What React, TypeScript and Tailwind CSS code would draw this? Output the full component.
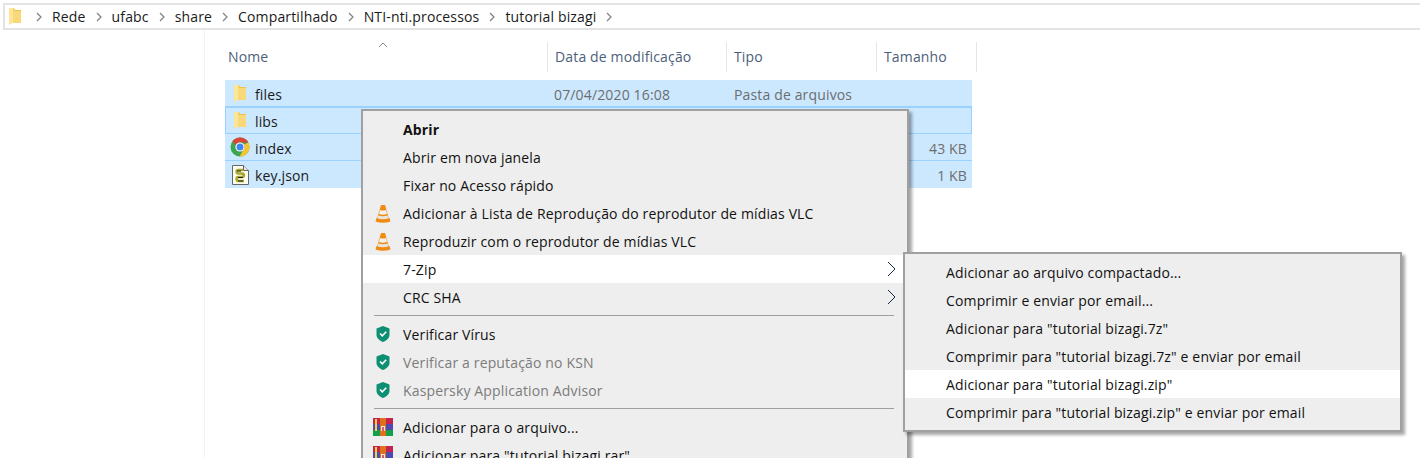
import React from "react";

function FolderIcon() {
  return (
    <svg width="12" height="17" viewBox="0 0 12 17" className="shrink-0">
      <path d="M0 0h5l1 2h6v13H4z" fill="#efc24f" />
      <path d="M4.500 3H12v12H4.500z" fill="#f8d878" />
      <path d="M0 0h4.500v14.500L0 17z" fill="#fde596" />
    </svg>
  );
}

function ChromeIcon() {
  return (
    <svg width="20" height="20" viewBox="0 0 20 20" className="shrink-0">
      <circle cx="10" cy="10" r="9.5" fill="#3fa650" />
      <path d="M10 .5a9.500 9.500 0 0 1 8.400 5H10a4.500 4.500 0 0 0-4.200 2.800L2.600 4A9.500 9.500 0 0 1 10 .5z" fill="#db4437" />
      <path d="M18.400 5.500A9.500 9.500 0 0 1 9.500 19.500l3.900-6.600A4.500 4.500 0 0 0 13.800 7.500z" fill="#f7c52f" />
      <circle cx="10" cy="10" r="4.600" fill="#fff" />
      <circle cx="10" cy="10" r="3.500" fill="#4285f4" />
    </svg>
  );
}

function ScriptIcon() {
  return (
    <svg width="17" height="20" viewBox="0 0 17 20" className="shrink-0">
      <path d="M.5.5h11l5 5v14H.5z" fill="#fdfdf2" stroke="#666" />
      <path d="M11.500.5v5h5" fill="#e8e8e8" stroke="#666" />
      <path d="M11 5H6.500C4 5 4 8.500 6.500 8.500H10c2.500 0 2.500 3.500 0 3.500H6.500C4 12 4 16 6.500 16H12" fill="none" stroke="#a8a82a" strokeWidth="2.600" />
      <path d="M5 6h4M6 12.500h5M6 16h5" stroke="#222" strokeWidth="1" />
    </svg>
  );
}

function VlcIcon() {
  return (
    <svg width="16" height="19" viewBox="0 0 16 19" className="shrink-0">
      <path d="M1.500 14h13l1 3.500q-7.500 2.500-15 0z" fill="#ef8a12" />
      <path d="M6 1h4l4 14q-6 2-12 0z" fill="#f08c13" />
      <path d="M5 6q3 1 6 0l1 4q-4 1.500-8 0z" fill="#f4f1ec" />
      <path d="M3.300 11.500q4.700 1.500 9.400 0l.8 3q-5.500 1.500-11 0z" fill="#e8e4de" />
    </svg>
  );
}

function ShieldIcon() {
  return (
    <svg width="14" height="16" viewBox="0 0 14 16" className="shrink-0">
      <path d="M7 0l6.500 2.500V9c0 3-3 5.500-6.500 7C3.500 14.500.5 12 .5 9V2.500z" fill="#0d8f73" />
      <path d="M4 7.500l2.300 2.300L10.200 5.800" fill="none" stroke="#fff" strokeWidth="1.600" />
    </svg>
  );
}

function RarIcon() {
  return (
    <svg width="20" height="19" viewBox="0 0 20 19" className="shrink-0">
      <rect x="0" y="0" width="20" height="6" fill="#c4234f" />
      <rect x="0" y="6" width="20" height="6" fill="#4f4ab0" />
      <rect x="0" y="12" width="20" height="6" fill="#14a04a" />
      <rect x="2" y="1" width="2" height="12" fill="#f2d43a" />
      <rect x="7" y="0" width="6" height="18" fill="#e0701c" />
      <rect x="8" y="8" width="4" height="5" fill="#f7efe2" />
      <rect x="9.300" y="9" width="1.400" height="4" fill="#b5234f" />
    </svg>
  );
}

function Crumb({ label }: { label: string }) {
  return (
    <>
      <svg width="6" height="10" viewBox="0 0 6 10" className="shrink-0">
        <path d="M1 1l4 4-4 4" fill="none" stroke="#7f7f7f" strokeWidth="1.200" />
      </svg>
      {label && <span>{label}</span>}
    </>
  );
}

function Row({
  icon,
  name,
  date,
  type,
  size,
  focused,
}: {
  icon: React.ReactNode;
  name: string;
  date?: string;
  type?: string;
  size?: string;
  focused?: boolean;
}) {
  return (
    <div
      className={`grid grid-cols-[322px_180px_150px_95px] h-[27px] items-center bg-[#cce8ff] border-b border-[#99d1ff] last:border-b-0 ${
        focused ? "outline outline-1 -outline-offset-1 outline-[#99d1ff]" : ""
      }`}
    >
      <div className="flex items-center">
        <div className="w-[30px] flex justify-center">{icon}</div>
        <span className="pt-[3px] text-[#1a1a1a]">{name}</span>
      </div>
      <span className="pt-[3px] pl-[7px] text-[#6d6d6d]">{date}</span>
      <span className="pt-[3px] pl-[7px] text-[#6d6d6d]">{type}</span>
      <span className="pt-[3px] pr-[5px] text-right text-[#6d6d6d]">{size}</span>
    </div>
  );
}

function MenuItem({
  icon,
  label,
  bold,
  disabled,
  hover,
  arrow,
  sub,
}: {
  icon?: React.ReactNode;
  label: string;
  bold?: boolean;
  disabled?: boolean;
  hover?: boolean;
  arrow?: boolean;
  sub?: boolean;
}) {
  return (
    <div
      className={`flex items-center h-7 ${hover ? "bg-white" : ""} ${
        disabled ? "text-[#7c7c7c]" : "text-[#111]"
      } ${bold ? "font-bold" : ""}`}
    >
      <div className={`${sub ? "w-[41px]" : "w-10"} flex justify-center shrink-0`}>{icon}</div>
      <span className="grow whitespace-nowrap pt-[2px]">{label}</span>
      {arrow && (
        <svg width="9" height="16" viewBox="0 0 9 16" className="mr-[11px]">
          <path d="M1 1l7 7-7 7" fill="none" stroke="#14264a" strokeWidth="1" />
        </svg>
      )}
    </div>
  );
}

function Separator() {
  return <div className="h-px bg-[#a0a0a0] ml-[11px] mr-[13px] my-1" />;
}

export default function App() {
  const submenu = [
    "Adicionar ao arquivo compactado...",
    "Comprimir e enviar por email...",
    'Adicionar para "tutorial bizagi.7z"',
    'Comprimir para "tutorial bizagi.7z" e enviar por email',
    'Adicionar para "tutorial bizagi.zip"',
    'Comprimir para "tutorial bizagi.zip" e enviar por email',
  ];

  return (
    <div className="relative w-[1420px] h-[458px] overflow-hidden bg-white font-['Open_Sans',sans-serif] text-[14px] leading-5 tracking-[0.15px]">
      <div className="pt-[3px] pl-[3px]">
        <div className="h-[27px] border-2 border-r-0 border-[#e3e3e3] flex items-center gap-[10px] pl-1 text-[#1a1a1a]">
          <div className="w-[17px] shrink-0">
            <FolderIcon />
          </div>
          <Crumb label="Rede" />
          <Crumb label="ufabc" />
          <Crumb label="share" />
          <Crumb label="Compartilhado" />
          <Crumb label="NTI-nti.processos" />
          <Crumb label="tutorial bizagi" />
          <Crumb label="" />
        </div>
      </div>

      <div className="ml-[204px] h-[428px] border-l border-[#f2f2f2] pt-3 pl-[20px]">
        <div className="relative grid grid-cols-[322px_179px_150px_101px] h-[30px] items-center text-[#4c607a]">
          <div className="pl-[3px]">Nome</div>
          <div className="pl-[7px] border-l border-[#e5e5e5] h-full flex items-center">Data de modificação</div>
          <div className="pl-[7px] border-l border-[#e5e5e5] h-full flex items-center">Tipo</div>
          <div className="pl-[7px] border-x border-[#e5e5e5] h-full flex items-center">Tamanho</div>
          <svg width="10" height="6" viewBox="0 0 10 6" className="absolute left-[153px] top-0">
            <path d="M1 5l4-4 4 4" fill="none" stroke="#8a8a8a" />
          </svg>
        </div>
        <div className="w-[747px] mt-2">
          <Row icon={<FolderIcon />} name="files" date="07/04/2020 16:08" type="Pasta de arquivos" />
          <Row icon={<FolderIcon />} name="libs" focused />
          <Row icon={<ChromeIcon />} name="index" size="43 KB" />
          <Row icon={<ScriptIcon />} name="key.json" size="1 KB" />
        </div>
      </div>

      <div className="absolute left-[361px] top-[109px] w-[548px] h-[360px] bg-[#eeeeee] border-2 border-[#a0a0a0] py-[4px] pl-0 shadow-[3px_3px_3px_rgba(0,0,0,0.35)]">
        <MenuItem label="Abrir" bold />
        <MenuItem label="Abrir em nova janela" />
        <MenuItem label="Fixar no Acesso rápido" />
        <MenuItem icon={<VlcIcon />} label="Adicionar à Lista de Reprodução do reprodutor de mídias VLC" />
        <MenuItem icon={<VlcIcon />} label="Reproduzir com o reprodutor de mídias VLC" />
        <MenuItem label="7-Zip" hover arrow />
        <MenuItem label="CRC SHA" arrow />
        <Separator />
        <MenuItem icon={<ShieldIcon />} label="Verificar Vírus" />
        <MenuItem icon={<ShieldIcon />} label="Verificar a reputação no KSN" disabled />
        <MenuItem icon={<ShieldIcon />} label="Kaspersky Application Advisor" disabled />
        <Separator />
        <MenuItem icon={<RarIcon />} label="Adicionar para o arquivo..." />
        <MenuItem icon={<RarIcon />} label={'Adicionar para "tutorial bizagi.rar"'} />
      </div>

      <div className="absolute left-[903px] top-[252px] w-[499px] h-[180px] bg-[#eeeeee] border-2 border-[#a0a0a0] py-[4px] shadow-[3px_3px_3px_rgba(0,0,0,0.35)]">
        {submenu.map((label, i) => (
          <MenuItem key={label} label={label} hover={i === 4} sub />
        ))}
      </div>
    </div>
  );
}
